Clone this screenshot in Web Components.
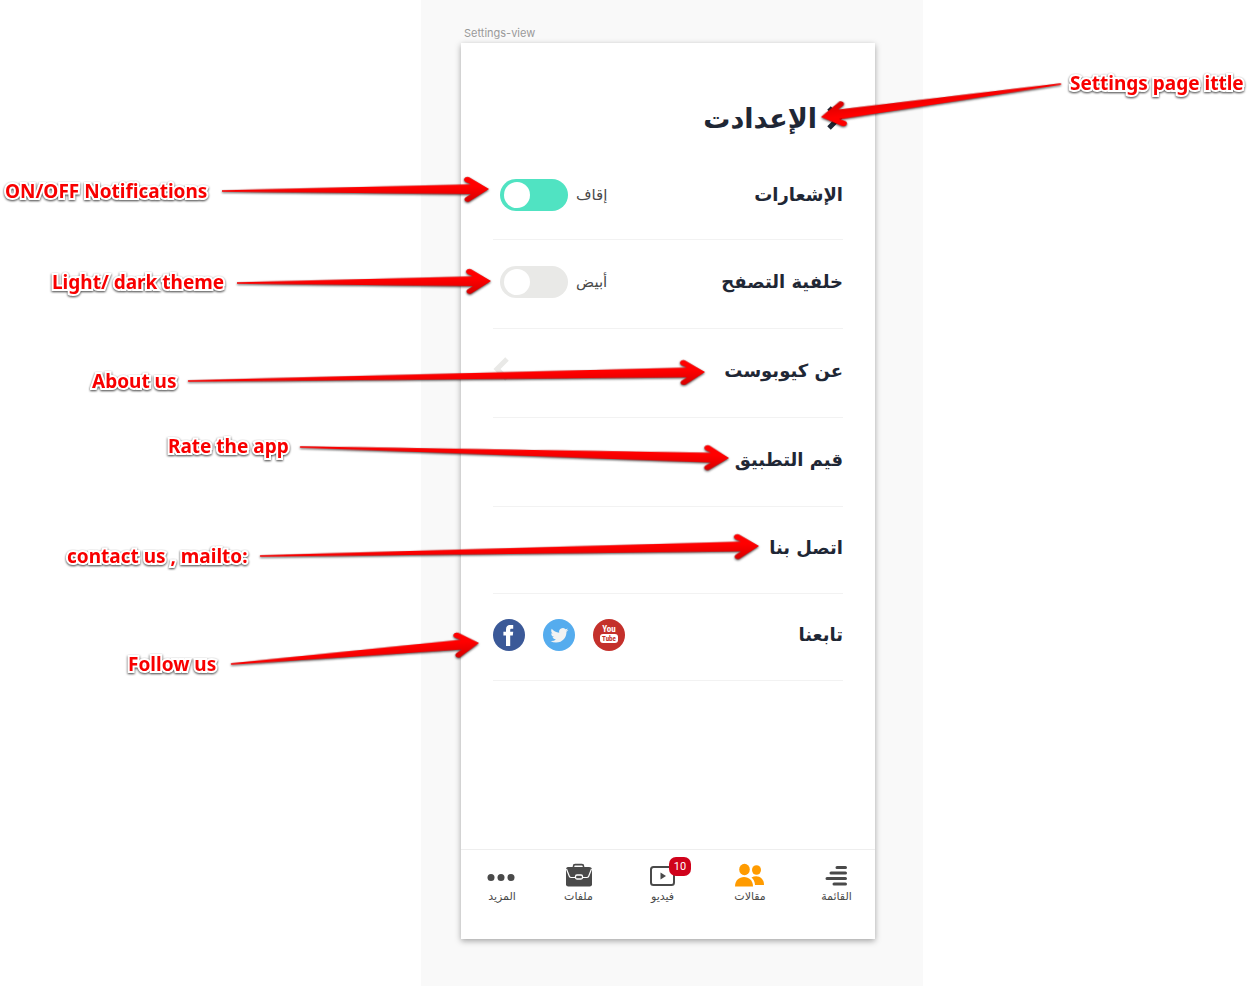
<!DOCTYPE html>
<html lang="en">
<head>
<meta charset="utf-8">
<meta name="viewport" content="width=device-width, initial-scale=1">
<title>Settings-view</title>
<style>
body { margin: 0; background: #fff; font-family: "DejaVu Sans", sans-serif; }
</style>
</head>
<body>
<spec-stage>
  <art-board name="Settings-view">
    <phone-screen>
      <screen-title slot="header">الإعدادت</screen-title>
      <setting-row label="الإشعارات" class="first"><toggle-switch text="إقاف" on></toggle-switch></setting-row>
      <setting-row label="خلفية التصفح"><toggle-switch text="أبيض"></toggle-switch></setting-row>
      <setting-row label="عن كيوبوست" href="#about" arrow></setting-row>
      <setting-row label="قيم التطبيق" href="#rate"></setting-row>
      <setting-row label="اتصل بنا" href="#contact" class="compact"></setting-row>
      <setting-row label="تابعنا" class="compact"><social-links></social-links></setting-row>
      <tab-bar slot="footer">
        <tab-item label="القائمة" icon="list"></tab-item>
        <tab-item label="مقالات" icon="people"></tab-item>
        <tab-item label="فيديو" icon="video" badge="10"></tab-item>
        <tab-item label="ملفات" icon="case"></tab-item>
        <tab-item label="المزيد" icon="dots"></tab-item>
      </tab-bar>
    </phone-screen>
    <note-layer slot="notes">
      <call-out x="1070" y="83" from="1061,84" to="821,117">Settings page ittle</call-out>
      <call-out x="5" y="191" from="222,191" to="489,189">ON/OFF Notifications</call-out>
      <call-out x="52" y="282" from="237,283" to="491,281">Light/ dark theme</call-out>
      <call-out x="92" y="381" from="188,381" to="705,372">About us</call-out>
      <call-out x="168" y="446" from="300,447" to="729,458">Rate the app</call-out>
      <call-out x="67" y="556" from="260,556" to="759,546">contact us , mailto:</call-out>
      <call-out x="128" y="664" from="231,664" to="479,643">Follow us</call-out>
    </note-layer>
  </art-board>
</spec-stage>

<script>
const define = (name, render) => customElements.define(name, class extends HTMLElement {
  connectedCallback() {
    if (!this.shadowRoot) this.attachShadow({ mode: 'open' }).innerHTML = render(this);
  }
});

define('spec-stage', () => `
<style>
:host { display: grid; grid-template-columns: 421fr 502fr 329fr; min-height: 100vh; overflow: hidden; }
::slotted(*) { grid-column: 2; }
</style><slot></slot>`);

define('art-board', el => `
<style>
:host { display: flex; flex-direction: column; position: relative; box-sizing: border-box; background: #f9f9f9; padding: 24px 48px 47px 40px; }
.name { font: 11px/18px Inter, sans-serif; color: #999; padding: 0 0 1px 3px; }
</style>
<div class="name">${el.getAttribute('name')}</div><slot></slot><slot name="notes"></slot>`);

define('phone-screen', () => `
<style>
:host { flex: 1; display: flex; flex-direction: column; background: #fff; box-shadow: 0 2px 6px rgba(0,0,0,.35); color: #1f2735; }
main { flex: 1; padding: 0 32px; direction: rtl; }
</style>
<slot name="header"></slot><main><slot></slot></main><slot name="footer"></slot>`);

define('screen-title', () => `
<style>
:host { display: flex; direction: rtl; align-items: center; gap: 12px; padding: 52px 32px 12px; height: 48px; }
button { border: 0; padding: 0; background: none; display: block; }
svg { display: block; overflow: visible; }
h1 { margin: 0; font-size: 27px; line-height: 48px; font-weight: 700; }
</style>
<button type="button" aria-label="Back"><svg width="14" height="26" viewBox="0 0 14 26"><path d="M0 2l10 10L0 22" fill="none" stroke="#1f2735" stroke-width="5"/></svg></button>
<h1><slot></slot></h1>`);

define('setting-row', el => {
  const href = el.getAttribute('href'), label = el.getAttribute('label');
  return `
<style>
:host { display: flex; align-items: center; justify-content: space-between; box-sizing: border-box; height: 89px; padding-bottom: 4px; border-bottom: 1px solid #f2f2f2; }
:host(.first) { height: 85px; }
:host(.compact) { height: 87px; }
h2 { margin: 0; font-size: 18px; line-height: 32px; font-weight: 700; }
a { flex: 1; display: flex; justify-content: space-between; align-items: center; color: inherit; text-decoration: none; }
svg { display: block; }
</style>
${href ? `<a href="${href}"><h2>${label}</h2>${el.hasAttribute('arrow') ? '<svg width="18" height="28" viewBox="0 0 18 28"><path d="M14 2L4 12l10 10" fill="none" stroke="#e9e9e7" stroke-width="5"/></svg>' : ''}</a>`
       : `<h2>${label}</h2><slot></slot>`}`;
});

define('toggle-switch', el => `
<style>
:host { display: block; padding-left: 7px; }
label { display: flex; align-items: center; gap: 8px; font-size: 15px; line-height: 32px; color: #4a4a4a; }
input { appearance: none; margin: 0; width: 68px; height: 32px; border-radius: 16px; background: #e9e9e7; position: relative; }
input:checked { background: #50e3c2; }
input::before { content: ""; position: absolute; left: 4px; top: 3px; width: 26px; height: 26px; border-radius: 50%; background: #fff; }
</style>
<label>${el.getAttribute('text')}<input type="checkbox" role="switch" ${el.hasAttribute('on') ? 'checked' : ''}></label>`);

define('social-links', () => `
<style>
:host { display: flex; direction: ltr; gap: 18px; }
a, svg { display: block; }
text { font-family: "Liberation Sans Narrow", "Roboto Condensed", Roboto, sans-serif; font-weight: 700; text-anchor: middle; }
</style>
<a href="#facebook" aria-label="Facebook"><svg width="32" height="32" viewBox="0 0 32 32"><circle cx="16" cy="16" r="16" fill="#3b5998"/><path fill="#fff" d="M13 27V16.500h-2.600v-3.700H13v-2.300C13 7.500 14.500 6 17.500 6h2.700v3.700h-1.700c-1 0-1.300.4-1.300 1.300v1.800h3l-.4 3.700h-2.600V27z"/></svg></a>
<a href="#twitter" aria-label="Twitter"><svg width="32" height="32" viewBox="0 0 32 32"><circle cx="16" cy="16" r="16" fill="#55acee"/><path fill="#f1f2f2" transform="translate(7.500 7.500) scale(.74)" d="M23.950 4.570a10 10 0 0 1-2.820.77 4.960 4.960 0 0 0 2.160-2.720c-.95.550-2 .95-3.130 1.180a4.920 4.920 0 0 0-8.380 4.480C7.690 8.100 4.070 6.130 1.640 3.160a4.820 4.820 0 0 0-.67 2.480c0 1.710.87 3.210 2.190 4.100a4.900 4.900 0 0 1-2.230-.62v.06a4.920 4.920 0 0 0 3.950 4.830 5 5 0 0 1-2.210.08 4.940 4.940 0 0 0 4.600 3.420A9.870 9.870 0 0 1 0 19.540a14 14 0 0 0 7.550 2.210c9.050 0 14-7.500 14-13.980 0-.21 0-.42-.02-.63a9.940 9.940 0 0 0 2.460-2.550z"/></svg></a>
<a href="#youtube" aria-label="YouTube"><svg width="32" height="32" viewBox="0 0 32 32"><circle cx="16" cy="16" r="16" fill="#c4302b"/><text x="16" y="13" font-size="9" fill="#fff">You</text><rect x="7" y="15" width="18" height="9" rx="3" fill="#fff"/><text x="16" y="22" font-size="7" fill="#c4302b">Tube</text></svg></a>`);

define('tab-bar', () => `
<style>
:host { display: grid; direction: rtl; grid-template-columns: 77fr 96fr 79fr 89fr 64fr 9fr; box-sizing: border-box; height: 90px; border-top: 1px solid #eee; padding-top: 13px; }
</style><slot></slot>`);

const icons = {
  list: '<g stroke="#4a4a4a" stroke-width="3" stroke-linecap="round"><path d="M15 4.500h8.500M9 10h14.500M5 15.500h18.500M12 21h11.500" transform="translate(1 0)"/></g>',
  people: '<g fill="#ff9b00"><ellipse cx="9.500" cy="6.500" rx="5.300" ry="5.700"/><path d="M0 23.500C0 17.500 4 14 9 14s9 3.500 9 9.500z"/><ellipse cx="21.500" cy="7" rx="4.500" ry="4.800"/><path d="M16.500 14.500C22 11.500 29 14 29 22h-9c-.2-3.200-1.300-5.600-3.500-7.500z"/></g>',
  video: '<rect x="4" y="4" width="23" height="18" rx="2.500" fill="none" stroke="#4a4a4a" stroke-width="2"/><path d="M13.500 9.500l5.500 3.500-5.500 3.500z" fill="#4a4a4a"/>',
  case: '<path d="M10.500 5V3.200c0-.9.700-1.600 1.600-1.600h6.800c.9 0 1.600.7 1.600 1.600V5" fill="none" stroke="#4a4a4a" stroke-width="1.600"/><path d="M5 4h21q3 0 3 3v14.200q0 2.300-2.300 2.300H5.300Q3 23.500 3 21.200V7q0-3 2-3z" fill="#4a4a4a"/><path d="M3.500 6l2.800 7.200q.5 1.300 2 1.300h15.400q1.500 0 2-1.300L28.500 6" fill="none" stroke="#fff" stroke-width="1.200"/><rect x="12.500" y="12" width="7" height="4" rx="1.500" fill="#4a4a4a" stroke="#fff" stroke-width="1.300"/>',
  dots: '<g fill="#4a4a4a"><circle cx="4" cy="14.500" r="3.500"/><circle cx="14" cy="14.500" r="3.500"/><circle cx="24" cy="14.500" r="3.500"/></g>'
};
define('tab-item', el => `
<style>
:host { display: block; }
a { display: flex; flex-direction: column; align-items: center; color: #4a4a4a; text-decoration: none; }
.icon { position: relative; height: 26px; }
svg { display: block; }
.badge { position: absolute; left: 22px; top: -6px; width: 22px; height: 19px; border-radius: 7px; background: #d0021b; color: #fff; font: 11px/19px Roboto, sans-serif; text-align: center; }
.label { font-size: 11px; line-height: 16px; }
</style>
<a href="#${el.getAttribute('icon')}"><span class="icon"><svg width="31" height="26" viewBox="0 0 31 26">${icons[el.getAttribute('icon')]}</svg>${el.hasAttribute('badge') ? `<span class="badge">${el.getAttribute('badge')}</span>` : ''}</span><span class="label">${el.getAttribute('label')}</span></a>`);

// Notes lie over the artboard on a free canvas whose origin is left of the board.
define('note-layer', () => `
<style>:host { position: absolute; left: -421px; top: 0; width: 1252px; height: 100%; pointer-events: none; }</style><slot></slot>`);

define('call-out', el => {
  const [x1, y1] = el.getAttribute('from').split(',').map(Number);
  const [x2, y2] = el.getAttribute('to').split(',').map(Number);
  const len = Math.hypot(x2 - x1, y2 - y1);
  const angle = Math.atan2(y2 - y1, x2 - x1) * 180 / Math.PI;
  return `
<style>
:host { display: block; }
svg { position: absolute; left: 0; top: 0; overflow: visible; filter: drop-shadow(0 1px 1px rgba(0,0,0,.7)); }
span { position: absolute; left: ${el.getAttribute('x')}px; top: ${el.getAttribute('y') - 14}px; white-space: nowrap; font: 700 19px/28px "Noto Sans", sans-serif; color: #f80000; -webkit-text-stroke: 4px #fff; paint-order: stroke fill; filter: drop-shadow(0 1px 1px rgba(0,0,0,.75)); }
</style>
<svg width="1" height="1" aria-hidden="true"><defs><linearGradient id="g" x1="0" y1="-12" x2="0" y2="12" gradientUnits="userSpaceOnUse"><stop offset=".4" stop-color="#f00"/><stop offset="1" stop-color="#d80000"/></linearGradient></defs><path fill="url(#g)" transform="translate(${x2} ${y2}) rotate(${angle})" d="M0 0L-20-12Q-23.500-13-25-10Q-25-8-23-7L-18-4.800L${-len}-.8V.8L-18 5L-23 8Q-25 9-24.500 11Q-23 13.500-20 12.500Z"/></svg>
<span><slot></slot></span>`;
});
</script>
</body>
</html>
